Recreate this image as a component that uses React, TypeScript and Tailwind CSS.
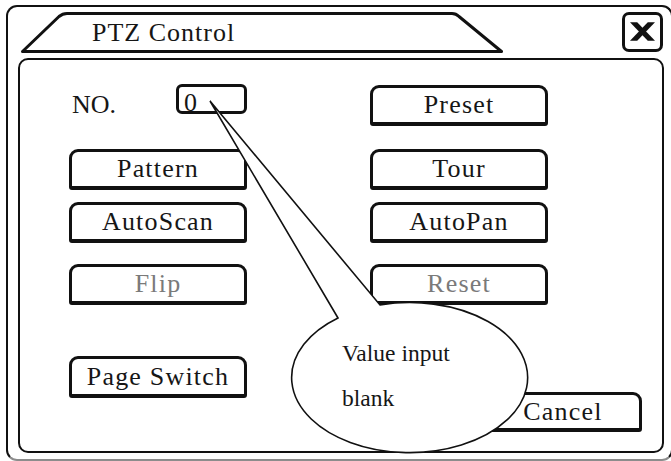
import React from "react";

const btn =
  "flex items-center justify-center rounded-t-[9px] rounded-b-[3px] border-[3px] border-b-4 border-[#111] text-[26px] leading-none tracking-[1.2px]";

function Btn({
  label,
  disabled,
  className = "",
  size = "h-[41px] w-[178px]",
}: {
  label: string;
  disabled?: boolean;
  className?: string;
  size?: string;
}) {
  return (
    <div className={`${btn} ${size} ${disabled ? "text-[#7a7a7a]" : "text-[#161616]"} ${className}`}>
      {label}
    </div>
  );
}

function Callout() {
  return (
    <>
      <svg className="pointer-events-none absolute left-0 top-0" width={671} height={461}>
        <path
          d="M210 101 L380 305 A118 75 0 1 1 338 318 Z"
          fill="white"
          stroke="#111"
          strokeWidth={1.6}
        />
      </svg>
      <div className="absolute left-[342px] top-[342px] flex flex-col gap-[21.5px] text-[23.5px] leading-none text-[#161616]">
        <span>Value input</span>
        <span>blank</span>
      </div>
    </>
  );
}

export default function App() {
  return (
    <div className="relative h-[461px] w-[671px] overflow-hidden bg-white [font-family:'Liberation_Serif',serif]">
      <div className="ml-[6px] mt-[5px] h-[456px] w-[667px] rounded-[11px] border-[2.5px] border-[#111] border-b-[#8c8c8c]">
        {/* title tab + close */}
        <div className="flex h-[51px] justify-between">
          <div className="relative h-full w-[500px]">
            <svg className="absolute left-0 top-0" width={500} height={51}>
              <path
                d="M14.5 44.5 L51 9.5 Q54.5 6.5 59 6.5 L444 6.5 Q448 6.5 451 9.5 L493.5 44.5 Z"
                fill="none"
                stroke="#111"
                strokeWidth={3}
                strokeLinejoin="round"
              />
            </svg>
            <div className="relative pl-[84px] pt-[13px] text-[26px] leading-none tracking-[1px] text-[#161616]">
              PTZ Control
            </div>
          </div>
          <div className="mr-[8.5px] mt-[4.5px] flex h-[40px] w-[41px] items-center justify-center rounded-[7px] border-[3px] border-[#111]">
            <svg width={25} height={19} viewBox="0 0 26 19">
              <polygon points="0,0 7.5,0 26,19 18.5,19" fill="#111" />
              <polygon points="18.5,0 26,0 7.5,19 0,19" fill="#111" />
            </svg>
          </div>
        </div>

        {/* body */}
        <div className="ml-[10px] flex h-[394.5px] w-[645.5px] rounded-[10px] border-[2.5px] border-[#111]">
          <div className="ml-[49px] flex w-[178px] flex-col pt-[24px]">
            <div className="flex h-[30px] items-start">
              <span className="mt-[8.4px] pl-[3px] text-[26px] leading-none text-[#161616]">NO.</span>
              <div className="ml-auto h-[30px] w-[71px] rounded-[6px] border-[3px] border-[#111] pl-[5px] pt-[2.5px] text-[26px] leading-none text-[#161616]">
                0
              </div>
            </div>
            <Btn label="Pattern" className="mt-[35px]" />
            <Btn label="AutoScan" className="mt-[12px]" />
            <Btn label="Flip" disabled className="mt-[21px]" />
            <Btn label="Page Switch" className="mt-[51px]" size="h-[42px] w-[178px]" />
          </div>
          <div className="ml-[123px] flex flex-1 flex-col items-start pt-[25px]">
            <Btn label="Preset" />
            <Btn label="Tour" className="mt-[23px]" />
            <Btn label="AutoPan" className="mt-[12px]" />
            <Btn label="Reset" disabled className="mt-[21px]" />
            <Btn label="Cancel" className="ml-[114px] mt-[87px]" size="h-[40px] w-[158px]" />
          </div>
        </div>
      </div>
      <Callout />
    </div>
  );
}
